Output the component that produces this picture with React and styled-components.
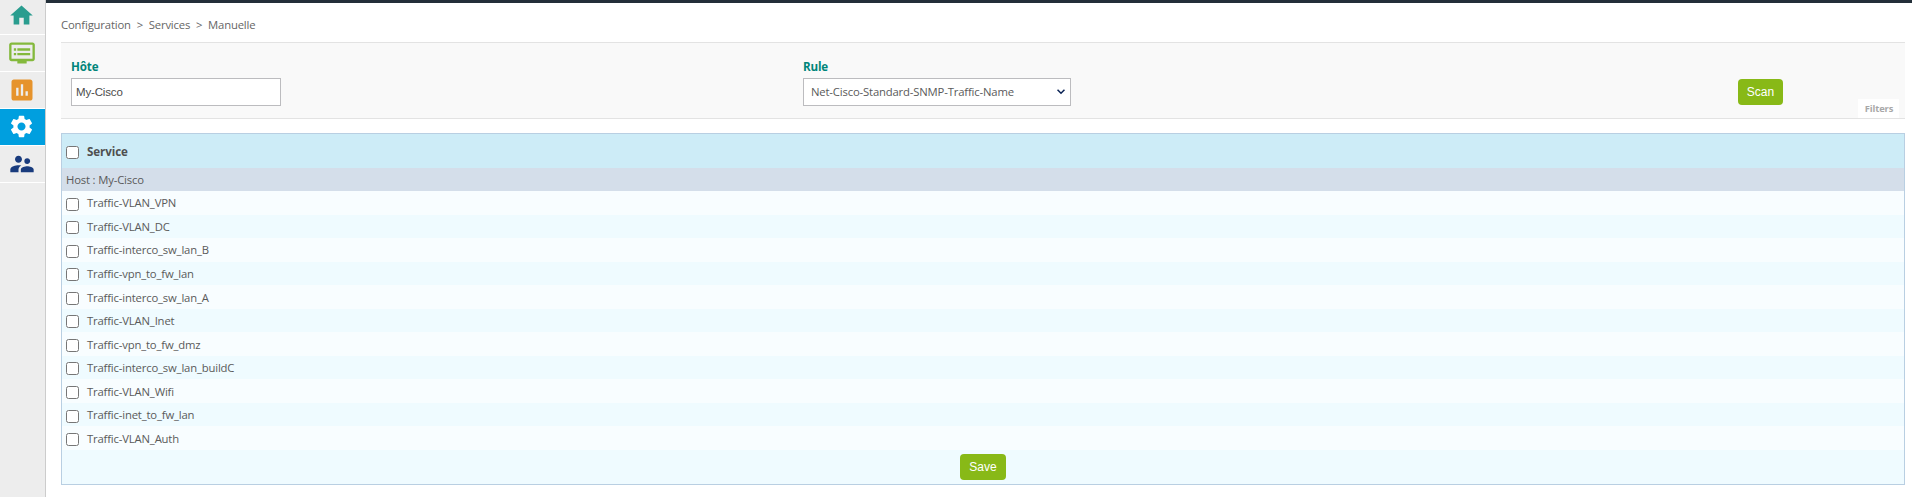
import React from 'react';
import styled, { createGlobalStyle } from 'styled-components';
import { MdHome, MdDvr, MdAssessment, MdSettings, MdSupervisorAccount } from 'react-icons/md';

const GlobalStyle = createGlobalStyle`
  * { box-sizing: border-box; }
  body {
    margin: 0;
    background: #fff;
    color: #5a5a5a;
    font: 11.3px/16px 'Open Sans', sans-serif;
    letter-spacing: -0.17px;
  }
`;

const Page = styled.div`
  display: flex;
  height: 497px;
  overflow: hidden;
`;

const Sidebar = styled.nav`
  flex: 0 0 46px;
  background: #ededed;
  border-right: 1px solid #ccc;
`;

const MenuItem = styled.a`
  display: flex;
  justify-content: center;
  height: ${(p) => (p.$first ? 35 : 37)}px;
  padding: ${(p) => p.$top}px 2px 0 0;
  border-bottom: 1px solid #fff;
  background: ${(p) => (p.$active ? '#009fdf' : 'transparent')};
  background-clip: padding-box;
  color: ${(p) => p.$color};

  svg { flex: none; }
`;

const Main = styled.main`
  flex: 1;
  min-width: 0;
  border-top: 3px solid #232f39;
  padding: 14px 7px 0 15px;
`;

const Breadcrumb = styled.div`
  display: flex;
  gap: 5.8px;
  height: 25px;
  color: #666;
`;

const FilterBar = styled.section`
  display: grid;
  grid-template-columns: 732px 935px 1fr;
  position: relative;
  height: 77px;
  padding: 16px 0 0 10px;
  background: #f9f9f9;
  border: solid #e3e3e3;
  border-width: 1px 0;
`;

const Field = styled.div`
  display: flex;
  flex-direction: column;
  gap: 3px;
`;

const Label = styled.label`
  color: #00857a;
  font-size: 11.6px;
  font-weight: 700;
  letter-spacing: -0.15px;
`;

const TextInput = styled.input`
  width: 210px;
  height: 28px;
  padding: 0 4px;
  border: 1px solid #bcbcbf;
  background: #fff;
  color: #4c4c4c;
  font: 11.5px 'Liberation Sans', sans-serif;
  letter-spacing: -0.15px;
`;

const SelectBox = styled.div`
  display: flex;
  align-items: center;
  justify-content: space-between;
  width: 268px;
  height: 28px;
  padding: 0 5px 0 7px;
  border: 1px solid #bcbcbf;
  background: #fff;
`;

const Button = styled.button`
  width: ${(p) => p.$width}px;
  height: 26px;
  padding: 0;
  border: 0;
  border-radius: 4px;
  background: #88b917;
  color: #fff;
  font: 12px 'Liberation Sans', sans-serif;
  letter-spacing: 0;
`;

const ScanCell = styled.div`
  padding-top: 20px;
`;

const FiltersTab = styled.span`
  position: absolute;
  right: 6px;
  bottom: 0;
  width: 41px;
  height: 19px;
  padding-left: 1px;
  background: #fff;
  color: #a8a8a8;
  font-size: 9.4px;
  font-weight: 700;
  letter-spacing: -0.1px;
  line-height: 20px;
  text-align: center;
`;

const List = styled.section`
  margin-top: 14px;
  border: 1px solid #b9cfe2;
`;

const ListHeader = styled.div`
  display: flex;
  gap: 8px;
  height: 34px;
  padding: 10px 4px 0;
  background: #cdecf7;
  color: #4f4f4f;
  font-size: 11.6px;
  font-weight: 700;
  letter-spacing: -0.1px;
`;

const HostRow = styled.div`
  height: 23px;
  padding: 4px;
  background: #d4deea;
`;

const Row = styled.div`
  display: flex;
  gap: 8px;
  height: 23.545px;
  padding: 4.4px 4px 0;
  background: ${(p) => (p.$even ? '#effbff' : '#f8fdff')};
`;

const Checkbox = styled.input.attrs({ type: 'checkbox' })`
  flex: none;
  width: 13px;
  height: 13px;
  margin: ${(p) => p.$offset}px 0 0;
`;

const ListFooter = styled.div`
  display: flex;
  justify-content: center;
  height: 34px;
  padding: 4px 0 0;
  background: #effbff;
`;

const menu = [
  { Icon: MdHome, color: '#2a9d8f', size: 27, top: 2 },
  { Icon: MdDvr, color: '#84b93c', size: 28, top: 4 },
  { Icon: MdAssessment, color: '#e6932c', size: 28, top: 4 },
  { Icon: MdSettings, color: '#fff', size: 27, top: 4, active: true },
  { Icon: MdSupervisorAccount, color: '#193b7d', size: 28, top: 4 },
];

const services = [
  'Traffic-VLAN_VPN', 'Traffic-VLAN_DC', 'Traffic-interco_sw_lan_B', 'Traffic-vpn_to_fw_lan',
  'Traffic-interco_sw_lan_A', 'Traffic-VLAN_Inet', 'Traffic-vpn_to_fw_dmz',
  'Traffic-interco_sw_lan_buildC', 'Traffic-VLAN_Wifi', 'Traffic-inet_to_fw_lan', 'Traffic-VLAN_Auth',
];

export default function App() {
  return (
    <Page>
      <GlobalStyle />
      <Sidebar>
        {menu.map(({ Icon, color, size, top, active }, i) => (
          <MenuItem key={color} $first={i === 0} $color={color} $top={top} $active={active}>
            <Icon size={size} />
          </MenuItem>
        ))}
      </Sidebar>
      <Main>
        <Breadcrumb>
          <span>Configuration</span><span>&gt;</span><span>Services</span><span>&gt;</span><span>Manuelle</span>
        </Breadcrumb>
        <FilterBar>
          <Field>
            <Label>Hôte</Label>
            <TextInput defaultValue="My-Cisco" />
          </Field>
          <Field>
            <Label>Rule</Label>
            <SelectBox>
              <span>Net-Cisco-Standard-SNMP-Traffic-Name</span>
              <svg width="8" height="6" viewBox="0 0 8 6" fill="none" stroke="#0b2355" strokeWidth="1.6">
                <path d="M.5.7 4 4.2 7.5.7" />
              </svg>
            </SelectBox>
          </Field>
          <ScanCell><Button $width={45}>Scan</Button></ScanCell>
          <FiltersTab>Filters</FiltersTab>
        </FilterBar>
        <List>
          <ListHeader><Checkbox $offset={2} /><span>Service</span></ListHeader>
          <HostRow>Host : My-Cisco</HostRow>
          {services.map((name, i) => (
            <Row key={name} $even={i % 2 === 1}>
              <Checkbox $offset={2.35} /><span>{name}</span>
            </Row>
          ))}
          <ListFooter><Button $width={46}>Save</Button></ListFooter>
        </List>
      </Main>
    </Page>
  );
}
